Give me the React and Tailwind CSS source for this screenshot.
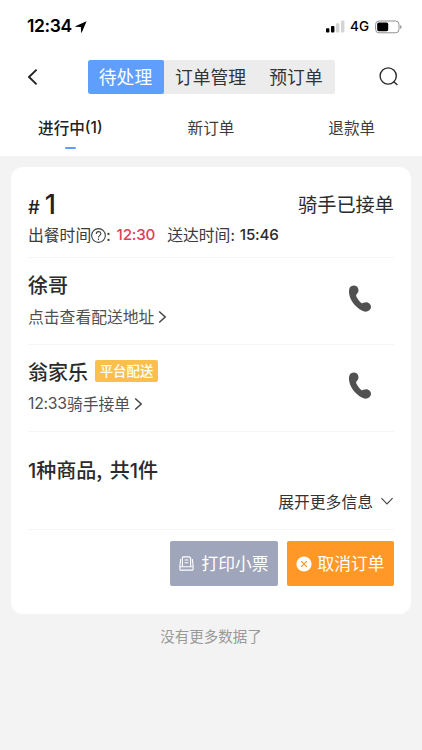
import React, { useState } from 'react';

const segments = [
  { name: '待处理', width: 'w-[76px]' },
  { name: '订单管理', width: 'w-[94px]' },
  { name: '预订单', width: 'w-[77px]' },
];

const tabs = [{ name: '进行中', count: 1 }, { name: '新订单' }, { name: '退款单' }];

const StatusBar = () => (
  <div className="flex h-[53px] items-center justify-between pl-[27px] pr-[20px] text-black">
    <div className="flex items-center gap-[3px]">
      <span className="font-['Inter',sans-serif] text-[17.5px] font-semibold tracking-[-0.4px]">12:34</span>
      <svg width="12" height="12" viewBox="0 0 12 12" fill="currentColor">
        <path d="M11.6 0.3 L0.3 5.2 Q0 5.5 0.5 5.7 L5.8 6 L6.2 11.4 Q6.5 12 6.8 11.4 Z" />
      </svg>
    </div>
    <div className="flex items-center">
      <svg width="19" height="13" viewBox="0 0 19 13">
        <rect x="0" y="8.2" width="3.4" height="4.2" rx="0.9" />
        <rect x="5" y="6" width="3.4" height="6.4" rx="0.9" />
        <rect x="10" y="3.2" width="3.4" height="9.2" rx="0.9" fill="#d4d4d4" />
        <rect x="15" y="0.4" width="3.4" height="12" rx="0.9" fill="#d4d4d4" />
      </svg>
      <span className="ml-[5px] font-['Inter',sans-serif] text-[13.5px] font-medium">4G</span>
      <svg className="ml-[6px]" width="27" height="14" viewBox="0 0 27 14">
        <rect x="0.6" y="1" width="23.4" height="11.8" rx="3.4" fill="none" stroke="#8f8f8f" />
        <rect x="2.2" y="2.6" width="11" height="8.6" rx="1.6" />
        <path d="M25.2 5 Q26.6 5.6 26.6 7 Q26.6 8.4 25.2 9 Z" fill="#8f8f8f" />
      </svg>
    </div>
  </div>
);

const RightArrow = () => (
  <svg width="9" height="14" viewBox="0 0 9 14" fill="none" stroke="#444" strokeWidth="1.5">
    <path d="M1.2 1.5 L7.2 7 L1.2 12.5" />
  </svg>
);

const PhoneIcon = () => (
  <svg width="24" height="28" viewBox="0 0 24 28" fill="#515151">
    <path d="M1 7.5 C0.8 4 1.6 2.2 3.2 1.3 C5.6 0 8.6 0.6 9.7 2.6 C11 5 10.8 7.4 8.8 9 C7.9 9.8 8 10.8 8.6 12 C9.7 14.2 11.2 16.2 13 17.7 C13.9 18.4 14.5 18.3 15.5 17.8 C18 16.7 20.2 17.2 21.9 19 C23.5 20.8 23.4 23.6 21.4 25.2 C19.2 27 16.6 27.1 13.8 25.6 C6.8 21.8 1.4 14.3 1 7.5 Z" />
  </svg>
);

const PrintIcon = () => (
  <svg width="15" height="15" viewBox="0 0 15 15" fill="none" stroke="white" strokeWidth="1.1">
    <path d="M2.2 3.6 H1.6 L0.9 9.8 V13.6 Q0.9 14.1 1.4 14.1 H13.6 Q14.1 14.1 14.1 13.6 V9.8 L13.4 3.6 H12.8" />
    <path d="M3.4 10.2 V1.6 Q3.4 0.9 4.1 0.9 H10.4 L11.6 2.1 V10.2" />
    <path d="M5.6 4 H9.4 M5.6 6.8 H9.4 M0.9 10.7 H14.1" />
  </svg>
);

const CancelIcon = () => (
  <svg width="16" height="16" viewBox="0 0 16 16">
    <circle cx="8" cy="8" r="7.6" fill="white" />
    <path d="M5.1 5.1 L10.9 10.9 M10.9 5.1 L5.1 10.9" stroke="#ff9827" strokeWidth="1.3" />
  </svg>
);

const ContactRow = ({ name, badge, time, detail }) => (
  <div className="flex h-[87px] items-center justify-between border-b border-[#f5f5f5] pr-[22px]">
    <div>
      <div className="flex h-[32px] items-center">
        <span className="mb-[2px] text-[20px] font-medium leading-[30px] text-[#2b2b2b]">{name}</span>
        {badge && (
          <span className="mb-[3px] ml-[7px] h-[22px] w-[63px] rounded-[2px] bg-[#fac04c] text-center text-[13.4px] font-medium leading-[21px] text-white">
            {badge}
          </span>
        )}
      </div>
      <div className="flex h-[31px] items-center gap-[4px] text-[15.8px] text-[#505050]">
        <div className="flex items-center">
          {time && <span className="font-['Inter',sans-serif] text-[15.8px] tracking-[-0.25px]">{time}</span>}
          <span>{detail}</span>
        </div>
        <RightArrow />
      </div>
    </div>
    <button className="mb-[5px]">
      <PhoneIcon />
    </button>
  </div>
);

const OrderCard = () => (
  <div className="mx-[11px] mt-[11px] h-[447px] rounded-[12px] bg-white pl-[17px] pr-[17px] pt-[18px]">
    {/* Order number and times */}
    <div className="h-[73px] border-b border-[#f5f5f5]">
      <div className="flex h-[38px] items-center justify-between">
        <div className="flex items-baseline gap-[5px] pt-[1px] font-['Inter',sans-serif] text-[#222]">
          <span className="text-[18.5px] font-medium leading-none">#</span>
          <span className="text-[27px] font-medium leading-none">1</span>
        </div>
        <span className="text-[19.2px] text-[#2b2b2b]">骑手已接单</span>
      </div>
      <div className="flex h-[24px] items-center whitespace-nowrap text-[15.8px] text-[#3b3b3b]">
        <span>出餐时间</span>
        <svg width="15" height="15" viewBox="0 0 14 14" fill="none" stroke="#3b3b3b" strokeWidth="1">
          <circle cx="7" cy="7" r="6.4" />
          <path d="M4.9 5.6 C4.9 2.6 9.3 2.7 9.2 5.4 C9.1 6.9 7 6.9 7 8.9 M7 9.9 V11.1" />
        </svg>
        <span>:</span>
        <span className="ml-[6px] font-['Inter',sans-serif] text-[15.2px] font-medium tracking-[-0.2px] text-[#e23d56]">12:30</span>
        <span className="ml-[12px]">送达时间:</span>
        <span className="ml-[5px] font-['Inter',sans-serif] text-[15.2px] font-medium tracking-[-0.2px] text-[#2b2b2b]">15:46</span>
      </div>
    </div>

    <ContactRow name="徐哥" detail="点击查看配送地址" />
    <ContactRow name="翁家乐" badge="平台配送" time="12:33" detail="骑手接单" />

    {/* Goods summary */}
    <div className="h-[98px] border-b border-[#f5f5f5] pt-[22px]">
      <div className="h-[31px] text-[20px] font-medium leading-[31px] text-[#2b2b2b]">
        <span className="font-['Inter',sans-serif]">1</span>种商品,{' '}
        <span className="ml-[3px]">共</span>
        <span className="font-['Inter',sans-serif]">1</span>件
      </div>
      <div className="flex h-[33px] items-center justify-end gap-[7px] text-[15.8px] text-[#333]">
        <span>展开更多信息</span>
        <svg width="14" height="9" viewBox="0 0 14 9" fill="none" stroke="#444" strokeWidth="1.1">
          <path d="M1.4 1.2 L7 7 L12.6 1.2" />
        </svg>
      </div>
    </div>

    {/* Actions */}
    <div className="flex justify-end gap-[9px] pt-[11px] text-[16.8px] text-white">
      <button className="flex h-[45px] w-[108px] items-center justify-center gap-[7px] rounded-[2px] bg-[#9fa5bb]">
        <PrintIcon />
        打印小票
      </button>
      <button className="flex h-[45px] w-[107px] items-center justify-center gap-[5px] rounded-[2px] bg-[#ff9827]">
        <CancelIcon />
        取消订单
      </button>
    </div>
  </div>
);

const App = () => {
  const [activeSegment, setActiveSegment] = useState(0);
  const [activeTab, setActiveTab] = useState(0);

  return (
    <div className="h-[750px] w-[422px] overflow-hidden bg-[#f3f3f3] font-['Noto_Sans_CJK_SC',sans-serif]">
      <div className="h-[156px] bg-white">
        <StatusBar />

        {/* Navigation */}
        <div className="flex h-[48px] items-center justify-between pl-[27px] pr-[23px]">
          <button>
            <svg width="12" height="18" viewBox="0 0 12 18" fill="none" stroke="#222" strokeWidth="1.9">
              <path d="M9.6 1.6 L2 9 L9.6 16.4" />
            </svg>
          </button>
          <div className="ml-[4px] flex h-[34px] overflow-hidden rounded-[2px] bg-[#ececec]">
            {segments.map((item, index) => (
              <button
                key={item.name}
                onClick={() => setActiveSegment(index)}
                className={`${item.width} whitespace-nowrap pb-[2px] text-[17.8px] leading-[32px] ${
                  index === activeSegment ? 'rounded-[2px] bg-[#609efe] text-white' : 'text-[#333]'
                }`}
              >
                {item.name}
              </button>
            ))}
          </div>
          <button>
            <svg width="20" height="20" viewBox="0 0 20 20" fill="none" stroke="#2b2b2b" strokeWidth="1.4">
              <circle cx="9.2" cy="9" r="8.1" />
              <path d="M14.6 14.4 L18.4 18" />
            </svg>
          </button>
        </div>

        {/* Tabs */}
        <div className="flex h-[55px]">
          {tabs.map((tab, index) => (
            <button
              key={tab.name}
              onClick={() => setActiveTab(index)}
              className={`flex flex-1 flex-col items-center pt-[14px] text-[15.6px] leading-[24px] ${
                index === activeTab ? 'font-medium text-[#222]' : 'text-[#3b3b3b]'
              }`}
            >
              <span className="flex h-[24px] items-center">
                {tab.name}
                {tab.count && (
                  <span className="pt-[2px] font-['Inter',sans-serif] text-[15.4px]">({tab.count})</span>
                )}
              </span>
              {index === activeTab && <span className="mt-[8px] h-[2px] w-[11px] rounded-full bg-[#609efe]" />}
            </button>
          ))}
        </div>
      </div>

      <OrderCard />

      <div className="pt-[11px] text-center text-[14.5px] leading-[22px] text-[#999]">没有更多数据了</div>
    </div>
  );
};

export default App;
